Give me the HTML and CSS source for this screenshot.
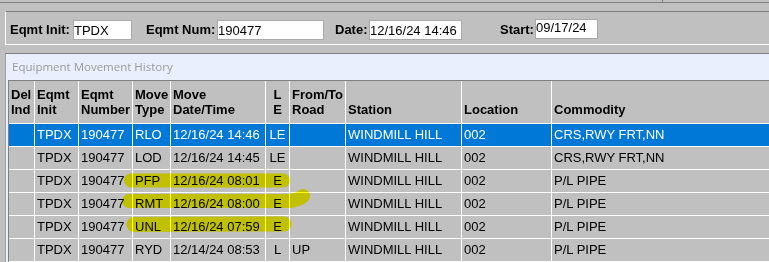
FILE: index.html
```html
<!DOCTYPE html>
<html lang="en">
<head>
    <meta charset="UTF-8">
    <title>Equipment Movement History</title>
    <link rel="stylesheet" href="styles.css">
</head>
<body>
    <div class="top-strip"><div class="top-cell"></div></div>

    <div class="search-panel">
        <div class="field">
            <label class="lbl-init">Eqmt Init:</label>
            <input type="text" class="in-init" value="TPDX">
        </div>
        <div class="field field-num">
            <label class="lbl-num">Eqmt Num:</label>
            <input type="text" class="in-num" value="190477">
        </div>
        <div class="field field-date">
            <label class="lbl-date">Date:</label>
            <input type="text" class="in-date" value="12/16/24 14:46">
        </div>
        <div class="field field-start">
            <label class="lbl-start">Start:</label>
            <input type="text" class="in-start" value="09/17/24">
        </div>
    </div>

    <div class="history">
        <div class="history-title">Equipment Movement History</div>
        <div class="grid">
            <div class="row head">
                <div>Del<br>Ind</div>
                <div>Eqmt<br>Init</div>
                <div>Eqmt<br>Number</div>
                <div>Move<br>Type</div>
                <div>Move<br>Date/Time</div>
                <div class="c">L<br>E</div>
                <div>From/To<br>Road</div>
                <div>Station</div>
                <div>Location</div>
                <div>Commodity</div>
            </div>
            <div class="row sel">
                <div></div><div>TPDX</div><div>190477</div><div>RLO</div><div>12/16/24 14:46</div>
                <div class="c">LE</div><div></div><div>WINDMILL HILL</div><div>002</div><div>CRS,RWY FRT,NN</div>
            </div>
            <div class="row">
                <div></div><div>TPDX</div><div>190477</div><div>LOD</div><div>12/16/24 14:45</div>
                <div class="c">LE</div><div></div><div>WINDMILL HILL</div><div>002</div><div>CRS,RWY FRT,NN</div>
            </div>
            <div class="row">
                <div></div><div>TPDX</div><div>190477</div><div>PFP</div><div>12/16/24 08:01</div>
                <div class="c">E</div><div></div><div>WINDMILL HILL</div><div>002</div><div>P/L PIPE</div>
            </div>
            <div class="row">
                <div></div><div>TPDX</div><div>190477</div><div>RMT</div><div>12/16/24 08:00</div>
                <div class="c">E</div><div></div><div>WINDMILL HILL</div><div>002</div><div>P/L PIPE</div>
            </div>
            <div class="row">
                <div></div><div>TPDX</div><div>190477</div><div>UNL</div><div>12/16/24 07:59</div>
                <div class="c">E</div><div></div><div>WINDMILL HILL</div><div>002</div><div>P/L PIPE</div>
            </div>
            <div class="row">
                <div></div><div>TPDX</div><div>190477</div><div>RYD</div><div>12/14/24 08:53</div>
                <div class="c">L</div><div>UP</div><div>WINDMILL HILL</div><div>002</div><div>P/L PIPE</div>
            </div>
        </div>
    </div>

    <!-- marker strokes drawn over the grid -->
    <svg class="marker" width="769" height="262" viewBox="0 0 769 262">
        <path d="M131 180.5 L283 180.5" stroke-width="14"/>
        <path d="M129 201 L288 201 Q298 200.5 303 196" stroke-width="14"/>
        <path d="M134 224.5 L284 224" stroke-width="15"/>
    </svg>
</body>
</html>
```

FILE: styles.css
```css
:root {
    --gray: #c0c0c0;
    --shadow: #808080;
    --title-bg: #e9effd;
    --select: #0078d7;
}
body {
    margin: 0;
    background: var(--gray);
    font-family: 'Liberation Sans', Arial, sans-serif;
    font-size: 13px;
    color: #000;
    position: relative;
    overflow: hidden;
}
.top-strip {
    height: 2px;
    border-bottom: 1px solid var(--shadow);
}
.top-cell {
    width: 662px;
    height: 2px;
    border-right: 1px solid var(--shadow);
}
.search-panel {
    margin: 8px 0 0 5px;
    height: 32px;
    border-top: 1px solid var(--shadow);
    border-left: 1px solid #fff;
    border-bottom: 1px solid #fff;
    display: flex;
    align-items: flex-start;
    padding: 8px 0 0 4px;
    box-sizing: border-box;
    height: 34px;
}
.field {
    display: flex;
    align-items: center;
}
.field label {
    font-weight: bold;
    line-height: 20px;
}
.field input {
    box-sizing: border-box;
    height: 20px;
    border: 1px solid #a9a9a9;
    padding: 0;
    margin: 0;
    font-family: 'Liberation Sans', Arial, sans-serif;
    font-size: 13px;
    color: #000;
    background: #fff;
    outline: none;
}
.lbl-init { width: 63px; }
.lbl-num { width: 71px; }
.lbl-date { width: 34px; }
.lbl-start { width: 35px; }
.in-init { width: 59px; }
.in-num { width: 107px; }
.in-date { width: 93px; }
.in-start {
    width: 63px;
    height: 21px;
    margin-top: -2px !important;
    padding-bottom: 4px !important;
}
.field-num { margin-left: 14px; }
.field-date { margin-left: 11px; }
.field-start { margin-left: 38px; }

.history {
    margin: 8px 0 0 5px;
    border-top: 1px solid var(--shadow);
    border-left: 1px solid #a0a0a0;
    background: var(--title-bg);
}
.history-title {
    height: 26px;
    box-sizing: border-box;
    padding: 5px 0 0 6px;
    font-family: 'Open Sans', 'Noto Sans', sans-serif;
    font-size: 11.5px;
    color: #9a9a9a;
}
.grid {
    margin-left: 2px;
    border-top: 1px solid var(--shadow);
    border-left: 1px solid var(--shadow);
    background: #fff;
    display: grid;
    grid-template-columns: 25px 43px 53px 37px 94px 23px 55px 115px 89px 1fr;
    grid-template-rows: 42px repeat(6, 22px);
    gap: 1px;
    padding-bottom: 1px;
}
.row {
    display: contents;
}
.row > div {
    background: var(--gray);
    padding-left: 2px;
    line-height: 22px;
    white-space: nowrap;
    overflow: hidden;
}
.row > .c {
    text-align: center;
    padding-left: 0;
}
.head > div {
    font-weight: bold;
    line-height: 15px;
    display: flex;
    align-items: flex-end;
    padding-bottom: 6px;
}
.head > .c {
    justify-content: center;
    text-align: center;
}
.sel > div {
    background: var(--select);
    color: #fff;
}
.marker {
    position: absolute;
    top: 0;
    left: 0;
    pointer-events: none;
    mix-blend-mode: multiply;
}
.marker path {
    fill: none;
    stroke: #ffff00;
    stroke-linecap: round;
    stroke-linejoin: round;
}
```
